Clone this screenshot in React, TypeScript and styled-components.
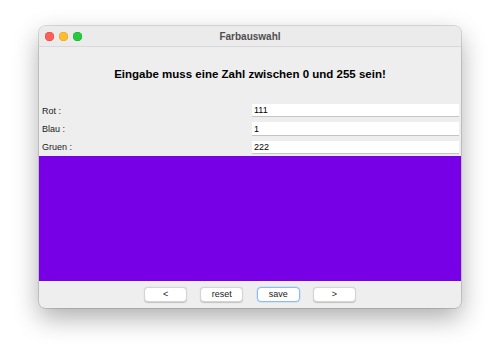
import React from "react";
import styled, { createGlobalStyle } from "styled-components";

const Global = createGlobalStyle`
  html, body { margin: 0; padding: 0; background: #ffffff; }
  body { font-family: "Liberation Sans", Arial, sans-serif; }
`;

const Page = styled.div`
  width: 502px;
  height: 362px;
  padding: 26px 0 0 39px;
  box-sizing: border-box;
`;

const Window = styled.div`
  width: 422px;
  height: 282px;
  border-radius: 6px;
  background: #eeeeee;
  box-shadow: 0 0 0 0.5px rgba(0, 0, 0, 0.25), 0 10px 26px rgba(0, 0, 0, 0.32);
  overflow: hidden;
  display: flex;
  flex-direction: column;
`;

const TitleBar = styled.div`
  position: relative;
  height: 20px;
  flex: none;
  background: #ebebeb;
  border-bottom: 1px solid #d9d9d9;
  display: flex;
  align-items: center;
  justify-content: center;
`;

const Lights = styled.div`
  position: absolute;
  left: 6px;
  top: 6px;
  display: flex;
  gap: 5.5px;
`;

const Light = styled.span<{ $c: string; $b: string }>`
  width: 8.5px;
  height: 8.5px;
  border-radius: 50%;
  background: ${(p) => p.$c};
  box-shadow: inset 0 0 0 0.5px ${(p) => p.$b};
`;

const Title = styled.div`
  font-size: 10px;
  font-weight: bold;
  color: #4f4f4f;
`;

const Message = styled.div`
  height: 54px;
  flex: none;
  display: flex;
  align-items: center;
  justify-content: center;
  font-size: 11.5px;
  font-weight: bold;
  color: #000;
`;

const Form = styled.div`
  display: grid;
  grid-template-columns: 211px 211px;
  grid-auto-rows: 18.35px;
  flex: none;
  height: 55px;
`;

const Label = styled.div`
  padding-left: 3px;
  padding-top: 1px;
  font-size: 9px;
  color: #1a1a1a;
  display: flex;
  align-items: center;
`;

const Field = styled.div`
  margin: 3px 2px 2px 2px;
  background: #ffffff;
  border-bottom: 1.5px solid #c4c4c4;
  font-size: 9px;
  color: #000;
  padding-left: 2px;
  display: flex;
  align-items: center;
`;

const Swatch = styled.div<{ $c: string }>`
  height: 125px;
  flex: none;
  background: ${(p) => p.$c};
`;

const Footer = styled.div`
  flex: 1;
  display: flex;
  justify-content: center;
  align-items: center;
  gap: 13.3px;
  padding-bottom: 1px;
`;

const Button = styled.button<{ $focus?: boolean }>`
  width: 43px;
  height: 15px;
  padding: 0;
  border-radius: 4px;
  background: #ffffff;
  border: ${(p) => (p.$focus ? "1px solid #8dbbf2" : "0.5px solid #d4d4d4")};
  box-shadow: ${(p) =>
    p.$focus ? "0 0 0 0.5px #b9d6f8" : "0 0.5px 1px rgba(0,0,0,0.18)"};
  font-family: "Liberation Sans", Arial, sans-serif;
  font-size: 9px;
  color: #1a1a1a;
  display: flex;
  align-items: center;
  justify-content: center;
`;

export default function App() {
  const rows = [
    { label: "Rot :", value: "111" },
    { label: "Blau :", value: "1" },
    { label: "Gruen :", value: "222" },
  ];
  return (
    <>
      <Global />
      <Page>
        <Window>
          <TitleBar>
            <Lights>
              <Light $c="#ff5f57" $b="#e0443e" />
              <Light $c="#febc2e" $b="#dea123" />
              <Light $c="#28c840" $b="#1aab29" />
            </Lights>
            <Title>Farbauswahl</Title>
          </TitleBar>
          <Message>Eingabe muss eine Zahl zwischen 0 und 255 sein!</Message>
          <Form>
            {rows.map((r) => (
              <React.Fragment key={r.label}>
                <Label>{r.label}</Label>
                <Field>{r.value}</Field>
              </React.Fragment>
            ))}
          </Form>
          <Swatch $c="rgb(120, 0, 230)" />
          <Footer>
            <Button>&lt;</Button>
            <Button>reset</Button>
            <Button $focus>save</Button>
            <Button>&gt;</Button>
          </Footer>
        </Window>
      </Page>
    </>
  );
}
